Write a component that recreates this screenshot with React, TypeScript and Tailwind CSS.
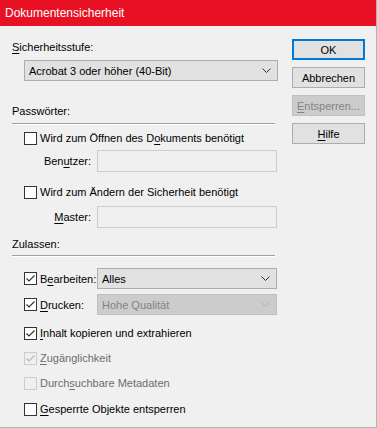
import React from "react";

const font = { fontFamily: '"Liberation Sans", Arial, sans-serif' };

const Mn = ({ children }: { children: React.ReactNode }) => (
    <span className="underline underline-offset-[2px] decoration-[1px]">{children}</span>
);

const Check = ({ checked, disabled }: { checked?: boolean; disabled?: boolean }) => (
    <div
        className={
            "w-[13px] h-[13px] shrink-0 border flex items-center justify-center " +
            (disabled ? "border-[#cccccc] bg-[#f0f0f0]" : "border-[#333333] bg-white")
        }
    >
        {checked && (
            <svg width="11" height="11" viewBox="0 0 11 11">
                <path
                    d="M1.5 5.5 L4 8 L9.5 2.5"
                    fill="none"
                    stroke={disabled ? "#b8b8b8" : "#333333"}
                    strokeWidth="1.2"
                />
            </svg>
        )}
    </div>
);

const Chevron = ({ disabled }: { disabled?: boolean }) => (
    <svg width="9" height="5" viewBox="0 0 9 5" className="shrink-0">
        <path d="M0.5 0.5 L4.5 4.5 L8.5 0.5" fill="none" stroke={disabled ? "#b0b0b0" : "#333333"} strokeWidth="1" />
    </svg>
);

const Select = ({ value, disabled, className }: { value: string; disabled?: boolean; className?: string }) => (
    <div
        className={
            "flex items-center justify-between pl-[4px] pr-[6px] border " +
            (disabled ? "bg-[#cccccc] border-[#bfbfbf] text-[#838383]" : "bg-[#e1e1e1] border-[#adadad] text-black") +
            " " +
            (className ?? "")
        }
    >
        <span>{value}</span>
        <Chevron disabled={disabled} />
    </div>
);

const Separator = () => (
    <div className="w-[263px]">
        <div className="h-px bg-[#a0a0a0]" />
        <div className="h-px bg-white" />
    </div>
);

const CheckRow = ({
    checked,
    disabled,
    children,
    className,
}: {
    checked?: boolean;
    disabled?: boolean;
    children: React.ReactNode;
    className?: string;
}) => (
    <div className={"flex items-center h-4 ml-3 gap-[3px] " + (className ?? "")}>
        <Check checked={checked} disabled={disabled} />
        <span className={disabled ? "text-[#6d6d6d]" : "text-black"}>{children}</span>
    </div>
);

const Field = ({ label, className }: { label: React.ReactNode; className?: string }) => (
    <div className={"flex items-center h-[22px] ml-3 " + (className ?? "")}>
        <span className="w-[67px] text-right">{label}</span>
        <div className="ml-[6px] w-[180px] h-[22px] border border-[#cccccc] bg-[#f0f0f0]" />
    </div>
);

const Button = ({
    children,
    primary,
    disabled,
    className,
}: {
    children: React.ReactNode;
    primary?: boolean;
    disabled?: boolean;
    className?: string;
}) => (
    <div
        className={
            "w-[73px] h-[21px] flex items-center justify-center " +
            (primary
                ? "border-2 border-[#0078d7] bg-[#e1e1e1] text-black"
                : disabled
                ? "border border-[#bfbfbf] bg-[#cccccc] text-[#838383]"
                : "border border-[#adadad] bg-[#e1e1e1] text-black") +
            " " +
            (className ?? "")
        }
    >
        {children}
    </div>
);

export default function App() {
    return (
        <div
            className="w-[377px] h-[428px] bg-[#f0f0f0] border-r border-b border-[#b4b4b4] text-[11px] leading-4 text-black flex flex-col overflow-hidden"
            style={font}
        >
            <div className="h-[26px] bg-[#e81123] text-white text-[12px] flex items-center pl-[5px] shrink-0">
                Dokumentensicherheit
            </div>

            <div className="flex">
                <div className="w-[292px] pl-3 flex flex-col">
                    <div className="mt-[13px] h-4">
                        <Mn>S</Mn>icherheitsstufe:
                    </div>
                    <Select value="Acrobat 3 oder höher (40-Bit)" className="mt-[5px] ml-3 w-[254px] h-[21px]" />

                    <div className="mt-[22px] h-4">Passwörter:</div>
                    <div className="mt-[4px]">
                        <Separator />
                    </div>
                    <CheckRow className="mt-[5px]">
                        Wird zum Öffnen des D<Mn>o</Mn>kuments benötigt
                    </CheckRow>
                    <Field className="mt-[4px]" label={<>Ben<Mn>u</Mn>tzer:</>} />
                    <CheckRow className="mt-[12px]">
                        Wird zum Ändern der Sicherheit benötigt
                    </CheckRow>
                    <Field className="mt-[6px]" label={<><Mn>M</Mn>aster:</>} />

                    <div className="mt-[8px] h-4">Zulassen:</div>
                    <div className="mt-[3px]">
                        <Separator />
                    </div>

                    <div className="mt-[11px] ml-3 h-[21px] flex items-center">
                        <div className="w-[73px] flex items-center gap-[3px]">
                            <Check checked />
                            <span>
                                B<Mn>e</Mn>arbeiten:
                            </span>
                        </div>
                        <Select value="Alles" className="w-[180px] h-[21px]" />
                    </div>
                    <div className="mt-[5px] ml-3 h-[21px] flex items-center">
                        <div className="w-[73px] flex items-center gap-[3px]">
                            <Check checked />
                            <span>
                                <Mn>D</Mn>rucken:
                            </span>
                        </div>
                        <Select value="Hohe Qualität" disabled className="w-[180px] h-[21px]" />
                    </div>

                    <CheckRow checked className="mt-[10px]">
                        <Mn>I</Mn>nhalt kopieren und extrahieren
                    </CheckRow>
                    <CheckRow checked disabled className="mt-[9px]">
                        <Mn>Z</Mn>ugänglichkeit
                    </CheckRow>
                    <CheckRow disabled className="mt-[9px]">
                        Durch<Mn>s</Mn>uchbare Metadaten
                    </CheckRow>
                    <CheckRow className="mt-[10px]">
                        <Mn>G</Mn>esperrte Objekte entsperren
                    </CheckRow>
                </div>

                <div className="flex flex-col gap-[7px] pt-[13px]">
                    <Button primary>OK</Button>
                    <Button>Abbrechen</Button>
                    <Button disabled>
                        <span>
                            <Mn>E</Mn>ntsperren...
                        </span>
                    </Button>
                    <Button>
                        <span>
                            <Mn>H</Mn>ilfe
                        </span>
                    </Button>
                </div>
            </div>
        </div>
    );
}
